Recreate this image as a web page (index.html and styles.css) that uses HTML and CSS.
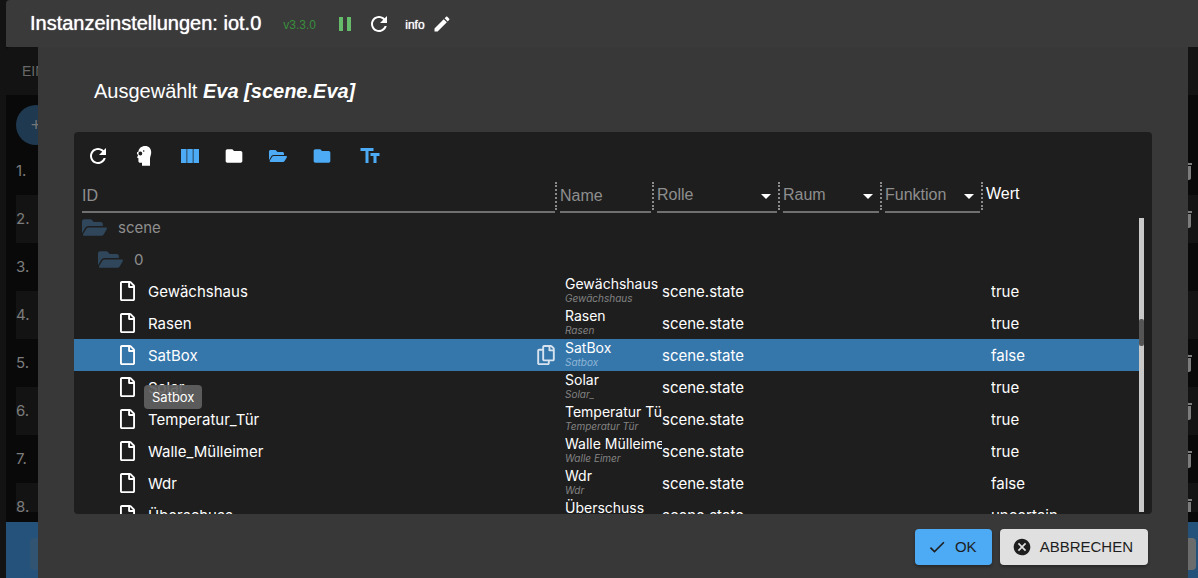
FILE: index.html
```html
<!DOCTYPE html>
<html lang="de">
<head>
<meta charset="utf-8">
<title>Instanzeinstellungen: iot.0</title>
<link rel="stylesheet" href="styles.css">
</head>
<body>
<svg class="sprite" aria-hidden="true">
  <symbol id="i-refresh" viewBox="0 0 24 24"><path d="M17.65 6.35C16.2 4.9 14.21 4 12 4c-4.42 0-7.99 3.58-7.99 8s3.57 8 7.99 8c3.73 0 6.84-2.55 7.73-6h-2.08c-.82 2.33-3.04 4-5.65 4-3.31 0-6-2.69-6-6s2.69-6 6-6c1.66 0 3.14.69 4.22 1.78L13 11h7V4l-2.35 2.35z"/></symbol>
  <symbol id="i-pause" viewBox="0 0 24 24"><path d="M6 19h4V5H6v14zm8-14v14h4V5h-4z"/></symbol>
  <symbol id="i-edit" viewBox="0 0 24 24"><path d="M3 17.25V21h3.75L17.81 9.94l-3.75-3.75L3 17.25zM20.71 7.04c.39-.39.39-1.02 0-1.41l-2.34-2.34c-.39-.39-1.02-.39-1.41 0l-1.83 1.83 3.75 3.75 1.83-1.83z"/></symbol>
  <symbol id="i-expert" viewBox="0 0 24 24"><path fill-rule="evenodd" d="M13.2 2C17 2 19.2 4.600 19.200 8.300c0 3.200-1.200 4.300-1.200 6.400V21.800H10V18.700H8.300C7.100 18.700 6.400 18 6.400 16.900V14.300L5 13.600 6.300 10.700 5 10.300V8.300L6.400 7.800C6.700 4.300 9.400 2 13.200 2zM8.300 7.600a1.900 1.900 0 1 0 .1 3.800 1.900 1.900 0 0 0-.1-3.800zM11.700 6.200a.8.8 0 1 0 0 1.600.8.8 0 0 0 0-1.600z"/></symbol>
  <symbol id="i-columns" viewBox="0 0 24 24"><path d="M9.300 5h5.400v14H9.300zM3 5h5.400v14H3zM15.600 5H21v14h-5.400z"/><path d="M8.400 5h.9v14h-.9zM14.700 5h.9v14h-.9z" opacity=".4"/></symbol>
  <symbol id="i-folder" viewBox="0 0 24 24"><path d="M10 4H4c-1.100 0-1.990.9-1.990 2L2 18c0 1.100.9 2 2 2h16c1.100 0 2-.9 2-2V8c0-1.100-.9-2-2-2h-8l-2-2z"/></symbol>
  <symbol id="i-open" viewBox="0 64 576 384"><path d="M572.694 292.093L500.270 416.248A63.997 63.997 0 0 1 444.989 448H45.025c-18.523 0-30.064-20.093-20.731-36.093l72.424-124.155A64 64 0 0 1 152 256h399.964c18.523 0 30.064 20.093 20.730 36.093zM152 224h328v-48c0-26.510-21.490-48-48-48H272l-64-64H48C21.490 64 0 85.490 0 112v278.046l69.077-118.418C86.214 242.250 117.989 224 152 224z"/></symbol>
  <symbol id="i-text" viewBox="0 0 24 24"><path d="M2.500 4v3h5v12h3V7h5V4h-13zm19 5h-9v3h3v7h3v-7h3V9z"/></symbol>
  <symbol id="i-file" viewBox="0 0 384 512"><path d="M369.900 97.900L286 14C277 5 264.800 0 252.100 0H48C21.500 0 0 21.500 0 48v416c0 26.500 21.500 48 48 48h288c26.500 0 48-21.500 48-48V131.900c0-12.700-5.100-25-14.100-34zM332.100 128H256V51.900l76.100 76.100zM48 464V48h160v104c0 13.300 10.700 24 24 24h104v288H48z"/></symbol>
  <symbol id="i-copy" viewBox="0 0 448 512"><path d="M433.941 65.941l-51.882-51.882A48 48 0 0 0 348.118 0H176c-26.510 0-48 21.490-48 48v48H48c-26.510 0-48 21.490-48 48v320c0 26.510 21.490 48 48 48h224c26.510 0 48-21.490 48-48v-48h80c26.510 0 48-21.490 48-48V99.882a48 48 0 0 0-14.059-33.941zM266 464H54a6 6 0 0 1-6-6V150a6 6 0 0 1 6-6h74v224c0 26.510 21.490 48 48 48h96v42a6 6 0 0 1-6 6zm128-96H182a6 6 0 0 1-6-6V54a6 6 0 0 1 6-6h106v88c0 13.255 10.745 24 24 24h88v202a6 6 0 0 1-6 6zm6-256h-64V48h9.632c1.591 0 3.117.632 4.243 1.757l48.368 48.368a6 6 0 0 1 1.757 4.243V112z"/></symbol>
  <symbol id="i-check" viewBox="0 0 24 24"><path d="M9 16.170L4.830 12l-1.420 1.410L9 19 21 7l-1.410-1.410z"/></symbol>
  <symbol id="i-cancel" viewBox="0 0 24 24"><path d="M12 2C6.470 2 2 6.470 2 12s4.470 10 10 10 10-4.470 10-10S17.530 2 12 2zm5 13.590L15.590 17 12 13.410 8.410 17 7 15.590 10.590 12 7 8.410 8.410 7 12 10.590 15.590 7 17 8.410 13.410 12 17 15.590z"/></symbol>
  <symbol id="i-delete" viewBox="0 0 24 24"><path d="M6 19c0 1.100.9 2 2 2h8c1.100 0 2-.9 2-2V7H6v12zM19 4h-3.500l-1-1h-5l-1 1H5v2h14V4z"/></symbol>
</svg>

<div class="app">
  <header class="app-bar">
    <h1>Instanzeinstellungen: iot.0</h1>
    <span class="version">v3.3.0</span>
    <button class="icon-btn running" aria-label="Pause"><svg><use href="#i-pause"/></svg></button>
    <button class="icon-btn" aria-label="Neustart"><svg><use href="#i-refresh"/></svg></button>
    <span class="log-level">info</span>
    <button class="icon-btn small" aria-label="Bearbeiten"><svg><use href="#i-edit"/></svg></button>
  </header>

  <div class="stage">
    <div class="settings">
      <nav class="tabs">EINSTELLUNGEN</nav>
      <div class="devices">
        <button class="add" aria-label="Hinzufügen">+</button>
        <ol class="device-list">
          <li><span>1.</span><svg><use href="#i-delete"/></svg></li>
          <li><span>2.</span><svg><use href="#i-delete"/></svg></li>
          <li><span>3.</span></li>
          <li><span>4.</span></li>
          <li><span>5.</span><svg><use href="#i-delete"/></svg></li>
          <li><span>6.</span><svg><use href="#i-delete"/></svg></li>
          <li><span>7.</span><svg><use href="#i-delete"/></svg></li>
          <li><span>8.</span><svg><use href="#i-delete"/></svg></li>
        </ol>
      </div>
      <footer class="settings-bar"><span class="bar-btn save"></span><span class="bar-btn close"></span></footer>
    </div>

    <section class="dialog" role="dialog" aria-labelledby="dialog-title">
      <h2 id="dialog-title">Ausgewählt <em>Eva [scene.Eva]</em></h2>
      <div class="browser">
        <div class="toolbar">
          <button aria-label="Aktualisieren"><svg><use href="#i-refresh"/></svg></button>
          <button aria-label="Expertenmodus"><svg><use href="#i-expert"/></svg></button>
          <button class="active" aria-label="Spalten"><svg><use href="#i-columns"/></svg></button>
          <button class="compact" aria-label="Alle schließen"><svg><use href="#i-folder"/></svg></button>
          <button class="compact active" aria-label="Alle öffnen"><svg class="open"><use href="#i-open"/></svg></button>
          <button class="compact active" aria-label="Eine Ebene schließen"><svg><use href="#i-folder"/></svg></button>
          <button class="active last" aria-label="Beschreibungen"><svg><use href="#i-text"/></svg></button>
        </div>
        <div class="filters">
          <div class="filter"><input type="text" placeholder="ID" aria-label="ID"></div>
          <div class="filter"><input type="text" placeholder="Name" aria-label="Name"></div>
          <div class="filter choice"><select aria-label="Rolle"><option>Rolle</option></select></div>
          <div class="filter choice"><select aria-label="Raum"><option>Raum</option></select></div>
          <div class="filter choice"><select aria-label="Funktion"><option>Funktion</option></select></div>
          <div class="value-head">Wert</div>
        </div>
        <div class="viewport">
          <table class="tree">
            <colgroup><col><col class="c-name"><col class="c-role"><col class="c-value"></colgroup>
            <tbody>
              <tr class="folder first"><td><div class="id"><svg><use href="#i-open"/></svg>scene</div></td><td></td><td></td><td></td></tr>
              <tr class="folder nested"><td><div class="id"><svg><use href="#i-open"/></svg>0</div></td><td></td><td></td><td></td></tr>
              <tr><td><div class="id"><svg><use href="#i-file"/></svg>Gewächshaus</div></td><td class="name">Gewächshaus<i>Gewächshaus</i></td><td>scene.state</td><td>true</td></tr>
              <tr><td><div class="id"><svg><use href="#i-file"/></svg>Rasen</div></td><td class="name">Rasen<i>Rasen</i></td><td>scene.state</td><td>true</td></tr>
              <tr class="selected"><td><div class="id"><svg><use href="#i-file"/></svg>SatBox<div class="tooltip" role="tooltip">Satbox</div><button class="copy" aria-label="Kopieren"><svg><use href="#i-copy"/></svg></button></div></td><td class="name">SatBox<i>Satbox</i></td><td>scene.state</td><td>false</td></tr>
              <tr><td><div class="id"><svg><use href="#i-file"/></svg>Solar</div></td><td class="name">Solar<i>Solar_</i></td><td>scene.state</td><td>true</td></tr>
              <tr><td><div class="id"><svg><use href="#i-file"/></svg>Temperatur_Tür</div></td><td class="name">Temperatur Tür<i>Temperatur Tür</i></td><td>scene.state</td><td>true</td></tr>
              <tr><td><div class="id"><svg><use href="#i-file"/></svg>Walle_Mülleimer</div></td><td class="name">Walle Mülleimer<i>Walle Eimer</i></td><td>scene.state</td><td>true</td></tr>
              <tr><td><div class="id"><svg><use href="#i-file"/></svg>Wdr</div></td><td class="name">Wdr<i>Wdr</i></td><td>scene.state</td><td>false</td></tr>
              <tr><td><div class="id"><svg><use href="#i-file"/></svg>Überschuss</div></td><td class="name">Überschuss<i>Überschuss</i></td><td>scene.state</td><td>uncertain</td></tr>
            </tbody>
          </table>
          <div class="track"><div class="thumb"></div></div>
        </div>
      </div>
      <div class="actions">
        <button class="ok"><svg><use href="#i-check"/></svg>OK</button>
        <button class="cancel"><svg><use href="#i-cancel"/></svg>ABBRECHEN</button>
      </div>
    </section>
  </div>
</div>
</body>
</html>
```
FILE: styles.css
```css
* { box-sizing: border-box; }
body {
  margin: 0;
  background: #131313;
  color: #fff;
  font: 16px/24px "Liberation Sans", Arial, sans-serif;
  overflow: hidden;
}
button, input, select { font: inherit; color: inherit; border: 0; padding: 0; margin: 0; background: none; }
svg { fill: currentColor; flex: none; display: block; }
.sprite { position: absolute; width: 0; height: 0; }

.app { height: 100vh; margin-left: 6px; display: flex; flex-direction: column; }
.app-bar {
  height: 47px; flex: none;
  display: flex; align-items: center;
  padding: 0 24px;
  background: #3a3a3a;
  border-top-left-radius: 4px;
}
.app-bar h1 { margin: 0 22px 2px 0; font-size: 20px; font-weight: 400; text-shadow: 0 0 1px #fff; }
.version { width: 45px; margin-top: 3px; color: #388e3c; font-size: 12px; }
.icon-btn { width: 34px; display: flex; justify-content: center; }
.icon-btn svg { width: 24px; height: 24px; }
.icon-btn.small svg { width: 20px; height: 20px; }
.running { color: #66bb6a; }
.log-level { margin: 3px 0 0 9px; font-size: 12px; text-shadow: 0 0 1px #fff; }

.stage { flex: 1; min-height: 0; position: relative; }
.settings { height: 100%; display: flex; flex-direction: column; background: #090909; color: #7c7c7c; }
.tabs {
  height: 48px; flex: none; padding: 12px 16px;
  background: #131313; border-top-left-radius: 4px;
  font-size: 14px; color: #686868;
}
.devices { flex: 1; min-height: 0; padding: 10px 0 10px 10px; display: flex; flex-direction: column; gap: 2px; }
.add { width: 40px; height: 40px; flex: none; border-radius: 50%; background: #1f3950; color: #777; font-size: 18px; }
.device-list { margin: 0; padding: 0; flex: 1; min-height: 0; overflow: hidden; list-style: none; }
.device-list li { height: 48px; display: flex; align-items: center; justify-content: space-between; padding-right: 1px; font-family: Inter, sans-serif; font-size: 15px; }
.device-list li:nth-child(even) { background: #131313; }
.device-list svg { width: 24px; height: 24px; }
.settings-bar { height: 56px; flex: none; display: flex; justify-content: space-between; padding: 16px 2px 8px 24px; background: #25527a; }
.bar-btn { width: 100px; border-radius: 4px; background: #305472; }
.bar-btn.close { background: #6c6c6c; }

.dialog {
  position: absolute; inset: 0 10px 0 32px;
  padding: 32px 36px 13px;
  display: flex; flex-direction: column;
  background: #383838;
}
.dialog h2 { margin: 0 20px 29px; font-size: 20px; font-weight: 400; line-height: 24px; }
.dialog h2 em { font-weight: 700; }
.browser { flex: 1; min-height: 0; display: flex; flex-direction: column; padding-right: 8px; border-radius: 4px; background: #1e1e1e; }

.toolbar { height: 48px; flex: none; display: flex; align-items: center; padding-left: 1px; }
.toolbar button { width: 46px; display: flex; justify-content: center; }
.toolbar button.compact { width: 44px; }
.toolbar button.compact svg { margin-right: 2px; }
.toolbar button.last { width: 50px; }
.toolbar svg { width: 24px; height: 24px; }
.toolbar .compact svg { width: 20px; height: 20px; }
.toolbar .compact .open { width: 18px; height: 12px; }
.active { color: #4dabf5; }

.filters { height: 33px; flex: none; display: grid; grid-template-columns: 1fr 97px 126px 102px 101px 161px; padding-left: 8px; }
.filter { display: flex; padding: 0 3px; position: relative; }
.filter:first-child { padding-left: 0; padding-right: 2px; }
.filter::after { content: ""; position: absolute; top: 2px; right: 0; height: 28px; border-right: 2px dotted #8a8a8a; }
.filter input, .filter select { width: 100%; min-width: 0; border-bottom: 2px solid #707070; appearance: none; outline: 0; border-radius: 0; color: #8e8e8e; }
.filter select { padding-bottom: 2px; }
.filter input::placeholder { color: #8e8e8e; opacity: 1; }
.choice::before { content: ""; position: absolute; right: 9px; top: 14px; border: 5px solid transparent; border-top-color: #fff; border-bottom: 0; pointer-events: none; }
.value-head { padding: 2px 0 0 3px; }

.viewport { flex: 1; min-height: 0; overflow: hidden; display: flex; align-items: flex-start; font-family: Inter, sans-serif; font-size: 15px; }
.tree { flex: 1; width: 0; table-layout: fixed; border-collapse: collapse; }
.c-name { width: 97px; }
.c-role { width: 329px; }
.c-value { width: 148px; }
.tree td { height: 32px; padding: 2px 0 0; overflow: hidden; white-space: nowrap; line-height: 24px; }
.tree .first td { height: 30px; padding: 0; }
.tree td:first-child { overflow: visible; }
.id { display: flex; align-items: center; gap: 13px; padding-left: 46px; position: relative; }
.id svg { width: 15px; height: 20px; margin-bottom: 2px; }
.folder { color: #8e8e8e; }
.folder .id { padding-left: 8px; gap: 11px; }
.nested .id { padding-left: 24px; }
.folder .id svg { width: 25px; height: 17px; color: #2f465b; }
.selected { background: #3576ab; }
.tree .name { font-size: 14px; line-height: 16px; vertical-align: top; padding-top: 1px; }
.name i { display: block; font-size: 10px; line-height: 12px; color: #838383; }
.selected .name i { color: #8eb6d6; }
.copy { margin-left: auto; margin-right: 10px; color: #d7e4ef; }
.id .copy svg { width: 18px; height: 20px; }
.tooltip {
  position: absolute; left: 70px; top: 41px; z-index: 1;
  padding: 0 8px; border-radius: 4px;
  background: rgba(97, 97, 97, .92);
  font-size: 13px; line-height: 24px;
}
.track { width: 5px; align-self: stretch; margin: 5px 0 2px; padding-top: 101px; background: #c9c9c9; }
.thumb { height: 27px; border-radius: 2px; background: #555; }

.actions { display: flex; justify-content: flex-end; gap: 8px; padding: 15px 4px 0; }
.actions button {
  height: 36px; display: flex; align-items: center; gap: 8px; padding: 0 15px 0 12px;
  border-radius: 4px; background: #e0e0e0; color: #1e1e1e; font-size: 15px;
  box-shadow: 0 2px 3px rgba(0, 0, 0, .3);
}
.actions .ok { background: #4dabf5; }
.actions svg { width: 20px; height: 20px; }
```
